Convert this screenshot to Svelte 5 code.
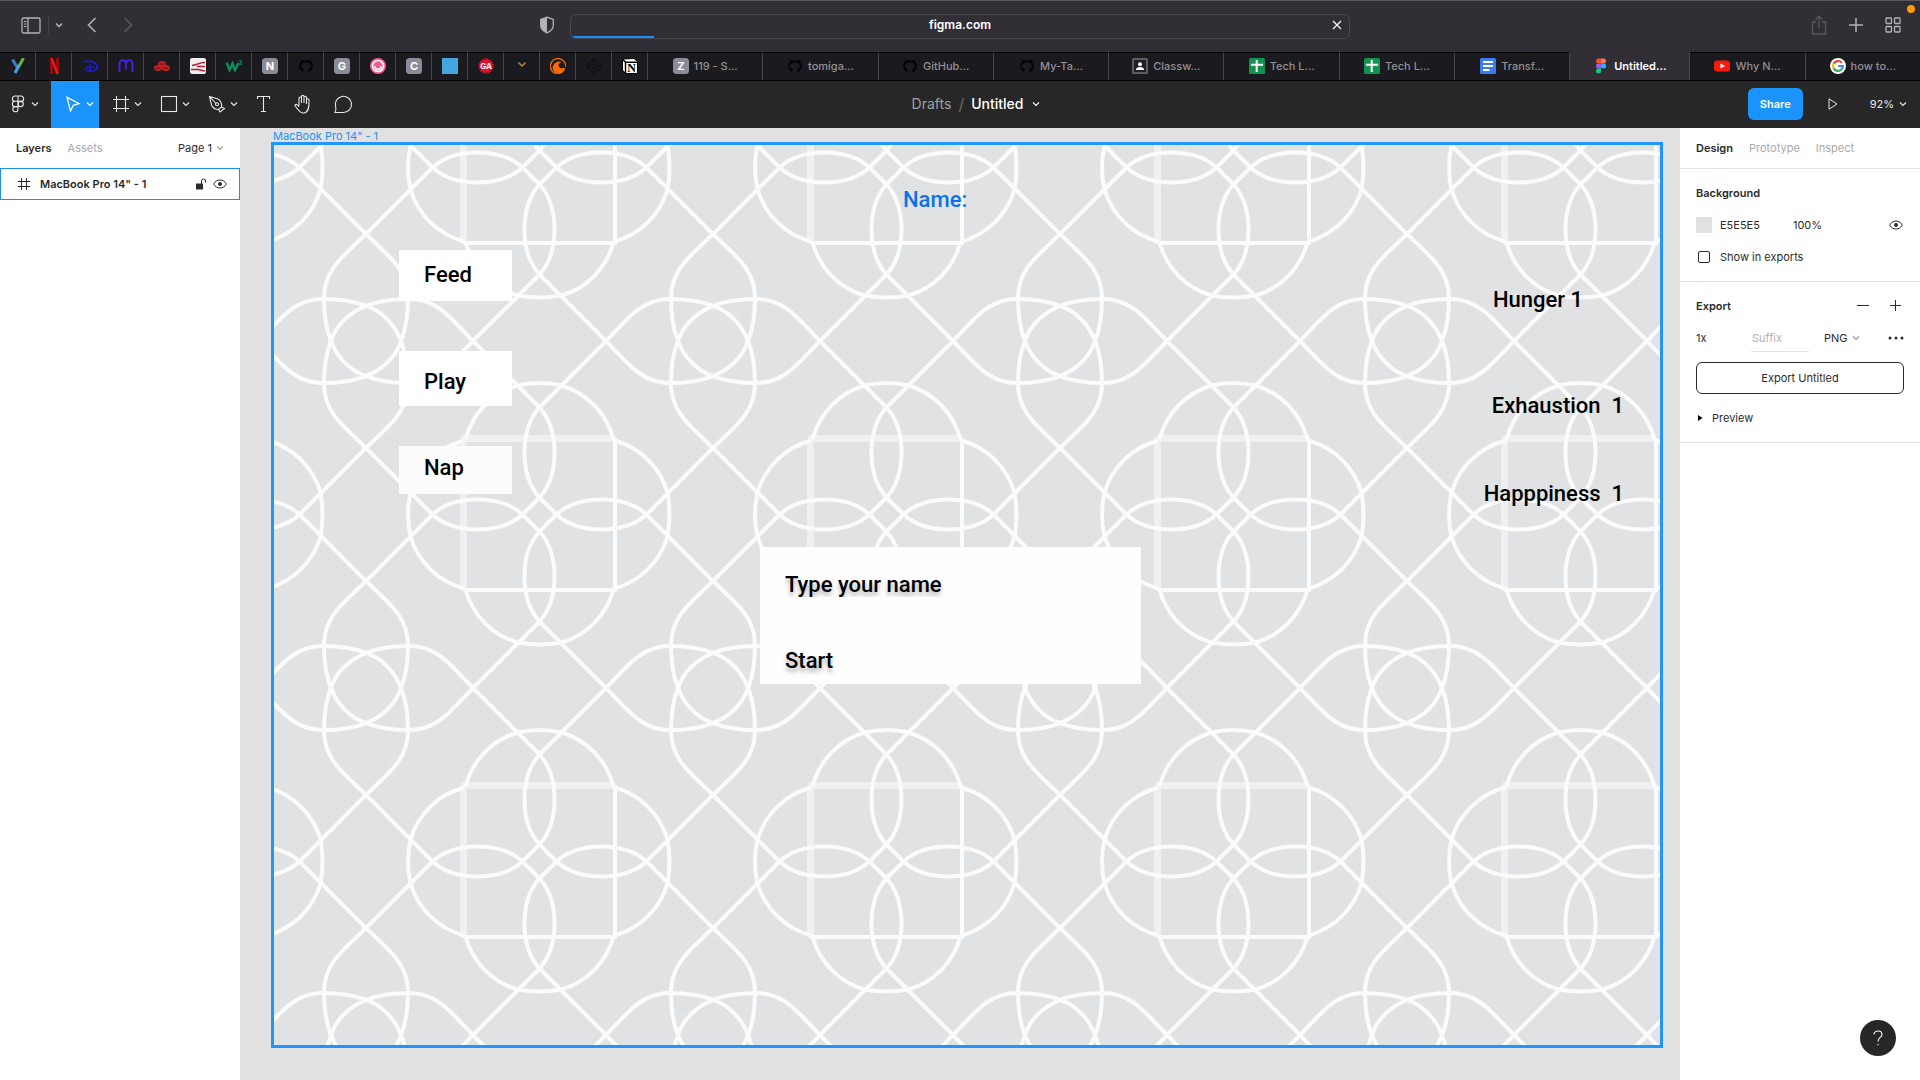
<script>
  const pinned = ['y', 'netflix', 'disney', 'm', 'redhat', 'stripe', 'w3', 'N', 'github', 'G', 'smile', 'C', 'square', 'ga', 'clock', 'crunchy', 'codepen', 'notion'];
  const tabs = [
    { icon: 'Z', title: '119 - S...' },
    { icon: 'github', title: 'tomiga...' },
    { icon: 'github', title: 'GitHub...' },
    { icon: 'github', title: 'My-Ta...' },
    { icon: 'classroom', title: 'Classw...' },
    { icon: 'sheets', title: 'Tech L...' },
    { icon: 'sheets', title: 'Tech L...' },
    { icon: 'docs', title: 'Transf...' },
    { icon: 'figma', title: 'Untitled...', active: true },
    { icon: 'youtube', title: 'Why N...' },
    { icon: 'google', title: 'how to...' }
  ];
  const tools = ['menu', 'move', 'frame', 'rect', 'pen', 'text', 'hand', 'comment'];
  const plain = ['text', 'hand', 'comment'];
  const quarter = [0, 90, 180, 270];
  const corners = [[-173.5, -173.5], [173.5, -173.5], [-173.5, 173.5], [173.5, 173.5]];
</script>

{#snippet chevron()}
  <svg class="chev" viewBox="0 0 8 8" width="8" height="8" aria-hidden="true"><path d="M1 2.5 4 5.5 7 2.5" fill="none" stroke="currentColor" stroke-width="1.1" /></svg>
{/snippet}

{#snippet eye()}
  <svg viewBox="0 0 14 10" width="14" height="10" aria-hidden="true">
    <path d="M.7 5C2 2.3 4.300 1 7 1s5 1.300 6.300 4C12 7.700 9.700 9 7 9S2 7.700.7 5z" fill="none" stroke="currentColor" />
    <circle cx="7" cy="5" r="2" fill="currentColor" />
  </svg>
{/snippet}

{#snippet favicon(name)}
  <svg class="fav" viewBox="0 0 16 16" width="16" height="16" aria-hidden="true">
    {#if name.length === 1 && name === name.toUpperCase()}
      <rect width="16" height="16" rx="3.500" fill="#8b8b99" />
      <text x="8" y="12" text-anchor="middle" font-size="11" font-weight="700" fill="#fff">{name}</text>
    {:else if name === 'y'}
      <path d="M2.500 1.500 7 9" stroke="#3a7fd0" stroke-width="3" />
      <path d="M13.500 0 8.500 9" stroke="#62b83c" stroke-width="3" />
      <path d="M9 7.500 5 15" stroke="#4aa5e0" stroke-width="3" />
    {:else if name === 'netflix'}
      <path d="M5.500 0v16M11.500 0v16" stroke="#b1060f" stroke-width="2.600" />
      <path d="M4.200 0h2.700l5.900 16h-2.700z" fill="#e81c16" />
    {:else if name === 'disney'}
      <path d="M1 4.500C5 1.500 14.500 3 15 8.500c.2 4-5 5.500-9.500 4.500C3 12.300 3 9.500 6 9c2.500-.4 6-.2 6 .8M8 5.500v8.500" fill="none" stroke="#1b1bea" stroke-width="1.500" />
    {:else if name === 'm'}
      <path d="M1.500 14V6.500C1.500 3.500 3 2.300 4.800 2.300S8 3.500 8 6.500V11M8 6.500C8 3.500 9.500 2.300 11.200 2.300s3.300 1.200 3.300 4.200V14" fill="none" stroke="#4b1fe0" stroke-width="2" />
    {:else if name === 'redhat'}
      <g fill="#c81e1e"><ellipse cx="8" cy="6" rx="4" ry="3" /><ellipse cx="4" cy="10" rx="4" ry="3" /><ellipse cx="12" cy="10" rx="4" ry="3" /></g>
      <path d="M5.500 6h5M1.500 10.200h5M9.500 10.200h5" stroke="#5a1015" stroke-width=".9" />
    {:else if name === 'stripe'}
      <rect width="16" height="16" rx="2" fill="#efefef" />
      <path d="M2 7.500C7 7 10 4 15 4.500M7 8.500h8M1 11.500h7L15 13" fill="none" stroke="#bb1c33" stroke-width="1.500" />
    {:else if name === 'w3'}
      <path d="M.5 4.500 3.500 12 6.500 5.500 9 12l3.500-7" fill="none" stroke="#08935c" stroke-width="2.400" />
      <text x="12.500" y="7" font-size="6" font-weight="700" fill="#08935c">3</text>
    {:else if name === 'github'}
      <path d="M5.800 14.500C2.800 13.500 1.200 11 1.200 8c0-1.700.6-3.200 1.600-4.400L3 1.500l2.200 1a8 8 0 0 1 5.600 0l2.200-1 .2 2.100A6.800 6.800 0 0 1 14.800 8c0 3-1.600 5.500-4.600 6.500v-3.200c2.200-.5 3-2 2.600-4.300C12.400 5 10 4.600 8 4.600S3.600 5 3.200 7c-.4 2.300.4 3.800 2.600 4.300v.9c-1.300.3-1.700-.4-2.300-1.200" fill="#050506" />
    {:else if name === 'smile'}
      <circle cx="8" cy="8" r="8" fill="#f9578f" /><circle cx="8" cy="8" r="5.500" fill="none" stroke="#fff" stroke-width="1.600" />
      <path d="M4.800 8a3.200 3.200 0 0 0 6.400 0" fill="none" stroke="#fff" stroke-width="1.400" />
    {:else if name === 'square'}
      <rect width="16" height="16" fill="#43a6df" />
    {:else if name === 'ga'}
      <circle cx="8" cy="8" r="6.500" fill="#e5112c" /><circle cx="8" cy="8" r="6.800" fill="none" stroke="#e5112c" stroke-width="1.800" stroke-dasharray="1.500 1" />
      <text x="8" y="11" text-anchor="middle" font-size="8" font-weight="700" fill="#fff">GA</text>
    {:else if name === 'clock'}
      <path d="M14 3.500A7.300 7.300 0 1 0 14.500 12" fill="none" stroke="#08222c" stroke-width="1.500" /><path d="M4.500 4.500 8 8l3.500-3.500" fill="none" stroke="#bd8740" stroke-width="1.500" />
    {:else if name === 'crunchy'}
      <path d="M15.700 9.200A7.700 7.700 0 1 0 6.500 15.800" fill="none" stroke="#f76b0a" stroke-width="1.300" />
      <path d="M13.700 9.500a3 3 0 1 1-1.900-5.200A6.200 6.200 0 1 0 15 10.500c-.4-.2-.9-.5-1.300-1z" fill="#f76b0a" />
    {:else if name === 'codepen'}
      <path d="M8 1.500 15 6v4.500L8 15 1 10.500V6zM1 6l7 4.500L15 6M1 10.500 8 6l7 4.500M8 1.500V6M8 10.500V15" fill="none" stroke="#111113" stroke-width="1.300" />
    {:else if name === 'notion'}
      <path d="M.5 1 12 .5 15.500 3.500v12H3.500L.5 12z" fill="#fff" stroke="#000" /><path d="M.5 1 3.500 4.200h12M3.500 4.200v11.300" fill="none" stroke="#000" stroke-width="1.400" />
      <text x="9.500" y="14" text-anchor="middle" font-size="12" font-weight="700" class="serif">N</text>
    {:else if name === 'classroom'}
      <rect width="16" height="16" rx="1.500" fill="#5b5f62" /><rect x="2" y="2" width="12" height="12" fill="#202124" />
      <circle cx="8" cy="6.300" r="2" fill="#fff" /><path d="M3.800 12c0-4 8.400-4 8.400 0z" fill="#fff" />
    {:else if name === 'sheets'}
      <rect width="16" height="16" rx="1.500" fill="#129150" /><path d="M2 6.700h12M7.700 2v12" stroke="#fff" stroke-width="2" />
    {:else if name === 'docs'}
      <rect width="16" height="16" rx="1.500" fill="#3b7bf0" /><path d="M3 4h10M3 8h10M3 12h6.500" stroke="#fff" stroke-width="1.800" />
    {:else if name === 'figma'}
      <path d="M8 .5H5.500a2.500 2.500 0 0 0 0 5H8z" fill="#f24e1e" /><path d="M8 .5h2.500a2.500 2.500 0 0 1 0 5H8z" fill="#ff7262" />
      <path d="M8 5.500H5.500a2.500 2.500 0 0 0 0 5H8z" fill="#a259ff" /><circle cx="10.500" cy="8" r="2.500" fill="#1abcfe" />
      <path d="M8 10.500H5.500A2.500 2.500 0 1 0 8 13z" fill="#0acf83" />
    {:else if name === 'youtube'}
      <rect y="2.500" width="16" height="11" rx="3" fill="#f61c0d" /><path d="M6.500 5.500v5L11 8z" fill="#fff" />
    {:else if name === 'google'}
      <circle cx="8" cy="8" r="8" fill="#fff" />
      <g fill="none" stroke-width="2.200">
        <path d="M11.700 4.700A4.900 4.900 0 0 0 3.600 5.800" stroke="#ea4335" /><path d="M3.600 5.800a4.900 4.900 0 0 0 0 4.400" stroke="#fbbc05" />
        <path d="M3.600 10.200a4.900 4.900 0 0 0 7.800 1.300" stroke="#34a853" /><path d="M11.400 11.500A4.900 4.900 0 0 0 12.800 8H8.200" stroke="#4285f4" />
      </g>
    {/if}
  </svg>
{/snippet}

{#snippet tool(name)}
  <svg viewBox="0 0 20 20" width="20" height="20" fill="none" stroke="currentColor" stroke-width="1.100" aria-hidden="true">
    {#if name === 'menu'}
      <path d="M10 2H7a2.600 2.600 0 0 0 0 5.300h3zM10 2h3a2.600 2.600 0 0 1 0 5.300h-3zM10 7.300H7a2.600 2.600 0 0 0 0 5.300h3z" />
      <circle cx="12.700" cy="10" r="2.600" /><path d="M10 12.600H7.200A2.600 2.600 0 1 0 10 15.200z" />
    {:else if name === 'move'}
      <path d="M4 3.300 16 9.500 10.300 11.300 7.500 17z" stroke-width="1.300" />
    {:else if name === 'frame'}
      <path d="M5.500 2v16M14.500 2v16M2 5.500h16M2 14.500h16" />
    {:else if name === 'rect'}
      <rect x="2.500" y="2.500" width="15" height="15" />
    {:else if name === 'pen'}
      <path d="M2.500 2.500 11 5c2.500 1.500 4.200 5 3.500 8L11.500 15.500C8 15.500 5.500 13.500 4.500 11zM2.500 2.500l6.500 7M14.500 13l3 1.500-4.500 3.500-1.500-2.500" />
      <circle cx="10" cy="10.300" r="1.500" />
    {:else if name === 'text'}
      <path d="M4.500 5V2.500h12V5M10.500 2.500v15M8 17.500h5" />
    {:else if name === 'hand'}
      <path d="M6 11.500V4.300a1.200 1.200 0 0 1 2.500 0V9M8.500 9V2.500a1.200 1.200 0 0 1 2.500 0V9M11 9V3.500a1.200 1.200 0 0 1 2.500 0V10M13.500 10V6a1.200 1.200 0 0 1 2.500 0c0 4 .8 12.500-5.500 13-4 .2-5.500-3.500-8-6.500-1.400-1.700.3-3 1.800-1.700L6 12.500" />
    {:else}
      <path d="M2 18.500c1.600-2.300.8-4 .6-6A8.100 8.100 0 1 1 10.500 18.500z" />
    {/if}
  </svg>
{/snippet}

<div class="screen">
  <header class="browser">
    <nav class="side">
      <button aria-label="Sidebar"><svg viewBox="0 0 20 17" width="20" height="17"><rect x="1" y="1" width="18" height="15" rx="1.500" fill="none" stroke="currentColor" stroke-width="1.300" /><path d="M7 1v15" stroke="currentColor" stroke-width="1.300" /><path d="M3 4.500h2.500M3 7h2.500M3 9.500h2.500" stroke="currentColor" /></svg></button>
      <button class="drop" aria-label="Tab groups"><svg viewBox="0 0 8 8" width="8" height="8"><path d="M1 2.500 4 5.500 7 2.500" fill="none" stroke="currentColor" stroke-width="1.600" /></svg></button>
      <button class="back" aria-label="Back"><svg viewBox="0 0 10 16" width="10" height="16"><path d="M8.500 1 1.500 8l7 7" fill="none" stroke="currentColor" stroke-width="1.600" /></svg></button>
      <button class="dim" aria-label="Forward"><svg viewBox="0 0 10 16" width="10" height="16"><path d="M1.500 1l7 7-7 7" fill="none" stroke="currentColor" stroke-width="1.600" /></svg></button>
      <button class="shield" aria-label="Privacy"><svg viewBox="0 0 16 18" width="16" height="18"><path d="M8 1.200 14.300 3.500v6c0 3.500-3 5.800-6.300 7.300C4.700 15.300 1.700 13 1.700 9.500v-6z" fill="none" stroke="currentColor" stroke-width="1.300" /><path d="M8 1.200v15.600C4.700 15.300 1.700 13 1.700 9.500v-6z" fill="currentColor" /></svg></button>
    </nav>
    <div class="url">
      <span>figma.com</span>
      <button aria-label="Stop loading"><svg viewBox="0 0 10 10" width="10" height="10"><path d="M1 1l8 8M9 1 1 9" stroke="currentColor" stroke-width="1.200" /></svg></button>
      <i class="progress"></i>
    </div>
    <nav class="side end">
      <button class="dim" aria-label="Share"><svg viewBox="0 0 16 20" width="16" height="20"><path d="M5 7H1.500v12h13V7H11M8 13V1.500M4.500 4.500 8 1l3.500 3.500" fill="none" stroke="currentColor" stroke-width="1.300" /></svg></button>
      <button aria-label="New tab"><svg viewBox="0 0 14 14" width="14" height="14"><path d="M7 0v14M0 7h14" stroke="currentColor" stroke-width="1.500" /></svg></button>
      <button aria-label="Tab overview"><svg viewBox="0 0 16 16" width="16" height="16" fill="none" stroke="currentColor" stroke-width="1.300"><rect x="1" y="1" width="5.500" height="5.500" rx=".8" /><rect x="9.500" y="1" width="5.500" height="5.500" rx=".8" /><rect x="1" y="9.500" width="5.500" height="5.500" rx=".8" /><rect x="9.500" y="9.500" width="5.500" height="5.500" rx=".8" /></svg></button>
    </nav>
    <i class="dot"></i>
  </header>

  <nav class="tabs">
    {#each pinned as name}
      <button class="tab pin" aria-label={name}>{@render favicon(name)}</button>
    {/each}
    {#each tabs as t}
      <button class="tab" class:active={t.active}>{@render favicon(t.icon)}<span>{t.title}</span></button>
    {/each}
  </nav>

  <div class="toolbar">
    <div class="tools">
      {#each tools as name}
        <button class="tool" class:first={name === 'menu'} class:current={name === 'move'} class:plain={plain.includes(name)} aria-label={name}>
          {@render tool(name)}
          {#if !plain.includes(name)}{@render chevron()}{/if}
        </button>
      {/each}
    </div>
    <div class="crumb"><a href="#drafts">Drafts</a><i>/</i><button>Untitled {@render chevron()}</button></div>
    <div class="actions">
      <button class="share">Share</button>
      <button class="present" aria-label="Present"><svg viewBox="0 0 10 12" width="10" height="12"><path d="M1 .8v10.400L9 6z" fill="none" stroke="currentColor" /></svg></button>
      <button class="zoom">92% {@render chevron()}</button>
    </div>
  </div>

  <main>
    <aside class="left">
      <div class="head">
        <button class="on">Layers</button><button>Assets</button><button class="page">Page 1 {@render chevron()}</button>
      </div>
      <div class="layer">
        <svg viewBox="0 0 12 12" width="12" height="12"><path d="M3.500 0v12M8.500 0v12M0 3.500h12M0 8.500h12" stroke="currentColor" fill="none" /></svg>
        <span>MacBook Pro 14" - 1</span>
        <button aria-label="Lock"><svg viewBox="0 0 10 12" width="10" height="12"><rect y="5.500" width="7" height="6" rx=".5" fill="currentColor" /><path d="M5.500 6V3a2 2 0 0 1 4 0v1.500" fill="none" stroke="currentColor" /></svg></button>
        <button aria-label="Visibility">{@render eye()}</button>
      </div>
    </aside>

    <section class="canvas">
      <span class="label">MacBook Pro 14" - 1</span>
      <div class="frame">
        <svg class="tiles" width="100%" height="100%" aria-hidden="true">
          <defs>
            <pattern id="lattice" x="92" y="196" width="347" height="347" patternUnits="userSpaceOnUse">
              <g transform="translate(173.500 173.500)" fill="none" stroke="#fbfbfb" stroke-width="4">
                <path d="M-76 76V-76M-78 -76H76" stroke="#eff0f0" stroke-width="7" />
                <path d="M75.500 -76V75.500H-76" />
                {#each quarter as a}
                  <g transform="rotate({a})">
                    {#if a === 0 || a === 270}
                      <path d="M-74 -75A76 76 0 0 1 -22 -129Q0 -134 22 -129A76 76 0 0 1 74 -75" />
                    {:else}
                      <path d="M-74 -75A76 76 0 0 1 -22 -128Q0 -132 22 -128A76 76 0 0 1 74 -75" />
                    {/if}
                    <path d="M66.500 -173.500 0 -107C-20 -85 -20 -39 0 -17L17 0C39 20 85 20 107 0L173.500 -66.500" />
                  </g>
                {/each}
                {#each corners as [x, y]}
                  {#each quarter as a}
                    <path transform="translate({x} {y}) rotate({a})" d="M0 -107C-20 -87 -42 -73 -42 -43C-42 -25 -40 -12 -35 0C-29 16 -16 30 0 35C12 40 25 42 43 42C73 42 87 20 107 0" />
                  {/each}
                {/each}
              </g>
            </pattern>
          </defs>
          <rect width="100%" height="100%" fill="url(#lattice)" />
        </svg>
        <span class="txt name">Name:</span>
        <button class="box feed">Feed</button>
        <button class="box play">Play</button>
        <button class="box nap">Nap</button>
        <span class="txt hunger">Hunger 1</span>
        <span class="txt exhaustion">Exhaustion  1</span>
        <span class="txt happiness">Happpiness  1</span>
        <form class="dialog">
          <input placeholder="Type your name" aria-label="Type your name" />
          <button type="button">Start</button>
        </form>
      </div>
    </section>

    <aside class="right">
      <div class="head">
        <button class="on">Design</button><button>Prototype</button><button>Inspect</button>
      </div>
      <section>
        <h2>Background</h2>
        <div class="row fill"><i class="swatch"></i><span>E5E5E5</span><span class="pct">100%</span><button class="last" aria-label="Visibility">{@render eye()}</button></div>
        <label class="row check"><input type="checkbox" />Show in exports</label>
      </section>
      <section>
        <div class="row"><h2>Export</h2>
          <button class="last" aria-label="Remove"><svg viewBox="0 0 12 12" width="12" height="12"><path d="M0 5.500h12" stroke="currentColor" /></svg></button>
          <button class="add" aria-label="Add"><svg viewBox="0 0 12 12" width="12" height="12"><path d="M0 5.500h11M5.500 0v11" stroke="currentColor" /></svg></button>
        </div>
        <div class="row export">
          <span>1x</span>
          <input placeholder="Suffix" aria-label="Suffix" />
          <div class="format"><select aria-label="Format"><option>PNG</option></select>{@render chevron()}</div>
          <button class="last" aria-label="More"><svg viewBox="0 0 16 4" width="16" height="4" fill="currentColor"><circle cx="2" cy="2" r="1.500" /><circle cx="8" cy="2" r="1.500" /><circle cx="14" cy="2" r="1.500" /></svg></button>
        </div>
        <button class="out">Export Untitled</button>
        <button class="row preview"><svg viewBox="0 0 5 6" width="5" height="6"><path d="M0 0v6l4.500-3z" /></svg>Preview</button>
      </section>
    </aside>
  </main>
  <button class="help" aria-label="Help"><svg viewBox="0 0 10 16" width="10" height="16"><path d="M1 4.500C1 2 2.800 1 5 1s4 1.300 4 3.500C9 7.500 5 7.500 5 11.500M5 14v1.200" fill="none" stroke="#fff" stroke-width="1.100" /></svg></button>
</div>

<style>
  :global(body) { margin: 0; }
  .screen, .screen * { box-sizing: border-box; }
  .screen { min-height: 100vh; display: flex; flex-direction: column; font: 11px/16px Inter, "Liberation Sans", sans-serif; color: #2b2b2b; }
  button, input, select { font: inherit; color: inherit; background: none; border: 0; padding: 0; margin: 0; }
  button { display: flex; align-items: center; }
  i { font-style: normal; }
  svg { display: block; flex: none; }
  .serif { font-family: "Liberation Serif", serif; }

  .browser { position: relative; height: 52px; display: grid; grid-template-columns: 1fr minmax(300px, 780px) 1fr; align-items: center; padding-bottom: 1px; background: #322e35; border-top: 1px solid #5a595e; color: #b4b1b8; }
  .side { display: flex; align-items: center; padding: 0 15px 2px 21px; }
  .side .drop { margin-left: 7px; padding-left: 6px; height: 18px; border-left: 1px solid #454249; }
  .side .back { margin: 0 26px 0 24px; }
  .side .dim { color: #5b575f; }
  .shield { margin-left: auto; }
  .side.end { justify-content: flex-end; gap: 22px; padding-right: 19px; }
  .url { position: relative; height: 25px; padding-bottom: 2px; border: 1px solid #4b484f; border-radius: 6px; display: flex; align-items: center; justify-content: center; overflow: hidden; color: #fff; font-size: 12px; font-weight: 600; }
  .url button { position: absolute; right: 7px; }
  .progress { position: absolute; left: 0; bottom: 0; height: 2px; width: 83px; background: #1e90f5; }
  .dot { position: absolute; right: 5px; top: 4px; width: 8px; height: 8px; border-radius: 50%; background: #ff9a0a; }

  .tabs { height: 29px; display: flex; background: #1b1a1e; border-bottom: 1px solid #000; }
  .tab { flex: 1 1 0; min-width: 0; justify-content: center; gap: 5px; padding-bottom: 1px; border-top: 1px solid #000; border-right: 1px solid #47464a; color: #929095; font-size: 11px; font-weight: 500; white-space: nowrap; }
  .tab.pin { flex: 0 0 36px; }
  .tab.active { flex: 0 0 120px; background: #322e35; border-top-color: #322e35; color: #fff; font-weight: 600; }
  .tab:last-child { border-right: 0; }

  .toolbar { height: 47px; display: grid; grid-template-columns: 1fr auto 1fr; background: #272727; color: #e8e8e8; }
  .tools { display: flex; }
  .tool { width: 48px; padding: 0 0 1px 12px; gap: 3px; }
  .tool.first { width: 51px; padding-left: 8px; }
  .tool.current { background: #1a94fb; color: #fff; }
  .tool.plain { width: 40px; padding-left: 0; justify-content: center; }
  .crumb { display: flex; align-items: center; gap: 7px; font-size: 14px; padding: 0 0 2px 32px; }
  .crumb a { color: #a0a0a0; text-decoration: none; }
  .crumb i { color: #6c6c6c; font-size: 16px; }
  .crumb button { gap: 9px; color: #fff; font-weight: 500; }
  .actions { display: flex; justify-content: flex-end; align-items: center; padding: 0 13px 1px 0; }
  .share { height: 32px; padding: 0 12px; border-radius: 6px; background: #1a94fb; color: #fff; font-weight: 600; }
  .present { margin: 0 32px 0 25px; }
  .zoom { gap: 5px; }

  main { flex: 1; display: flex; }
  aside { flex: 0 0 240px; background: #fff; }
  .head { height: 40px; display: flex; align-items: center; gap: 16px; padding: 0 16px; color: #a9a9a9; }
  .head .on { color: #2b2b2b; font-weight: 600; }
  .head .page { margin-left: auto; gap: 4px; color: #2b2b2b; }
  .page .chev, .format .chev { color: #999; }
  .layer { height: 32px; display: flex; align-items: center; padding: 0 12px 0 17px; border: 1px solid #1a8ff0; font-weight: 600; }
  .layer span { flex: 1; padding-left: 10px; }
  .layer button + button { margin-left: 7px; }

  .canvas { flex: 1; position: relative; display: flex; padding: 14px 17px 32px 31px; background: #e1e1e1; }
  .label { position: absolute; left: 33px; top: 0; color: #1a94fb; }
  .frame { flex: 1; position: relative; border: 3px solid #1f96fb; background: #e1e2e4; font: 500 22px/26px Roboto, sans-serif; color: #000; }
  .tiles { position: absolute; inset: 0; }
  .txt { position: absolute; white-space: pre; }
  .name { left: 629px; top: 42px; color: #0b72e7; }
  .hunger { right: 77px; top: 142px; }
  .exhaustion { right: 36px; top: 248px; }
  .happiness { right: 36px; top: 336px; }
  .box { position: absolute; left: 125px; width: 113px; padding-left: 25px; background: #fff; }
  .feed { top: 105px; height: 51px; padding-bottom: 1px; }
  .play { top: 206px; height: 55px; padding-top: 7px; }
  .nap { top: 301px; height: 48px; padding-bottom: 4px; background: #fcfcfc; }
  .dialog { position: absolute; left: 486px; top: 402px; width: 381px; height: 137px; padding: 24px 25px 10px; background: #fefefe; display: flex; flex-direction: column; justify-content: space-between; align-items: flex-start; text-shadow: 0 4px 4px rgba(0, 0, 0, .3); }
  .dialog input { width: 100%; height: 30px; margin-top: -2px; text-shadow: inherit; }
  .dialog input::placeholder { color: #000; opacity: 1; }
  .dialog button { text-shadow: inherit; }

  .right section { padding: 8px 16px; border-top: 1px solid #e1e1e1; }
  .right section:last-child { border-bottom: 1px solid #e1e1e1; }
  h2 { margin: 0; font-size: 11px; line-height: 32px; font-weight: 600; }
  .row { height: 32px; display: flex; align-items: center; }
  .last { margin-left: auto; }
  .fill .last { padding-right: 1px; }
  .add { margin: 0 2px 0 21px; }
  .swatch { width: 16px; height: 16px; margin-right: 8px; background: #e1e1e1; }
  .pct { margin-left: 33px; }
  .check { gap: 10px; padding-left: 2px; }
  .check input { appearance: none; width: 12px; height: 12px; border: 1px solid #2b2b2b; border-radius: 2px; }
  .export span { width: 55px; }
  .export input { width: 58px; height: 28px; border-bottom: 1px solid #e1e1e1; padding-left: 1px; }
  .export input::placeholder { color: #b0b0b0; opacity: 1; }
  .format { display: flex; align-items: center; gap: 4px; margin-left: 15px; }
  .format select { appearance: none; }
  .out { width: 100%; height: 32px; margin: 8px 0; justify-content: center; border: 1px solid #2b2b2b; border-radius: 6px; }
  .preview { padding-left: 2px; gap: 9px; }
  .help { position: fixed; right: 24px; bottom: 24px; width: 36px; height: 36px; border-radius: 50%; justify-content: center; background: #272727; }
</style>
